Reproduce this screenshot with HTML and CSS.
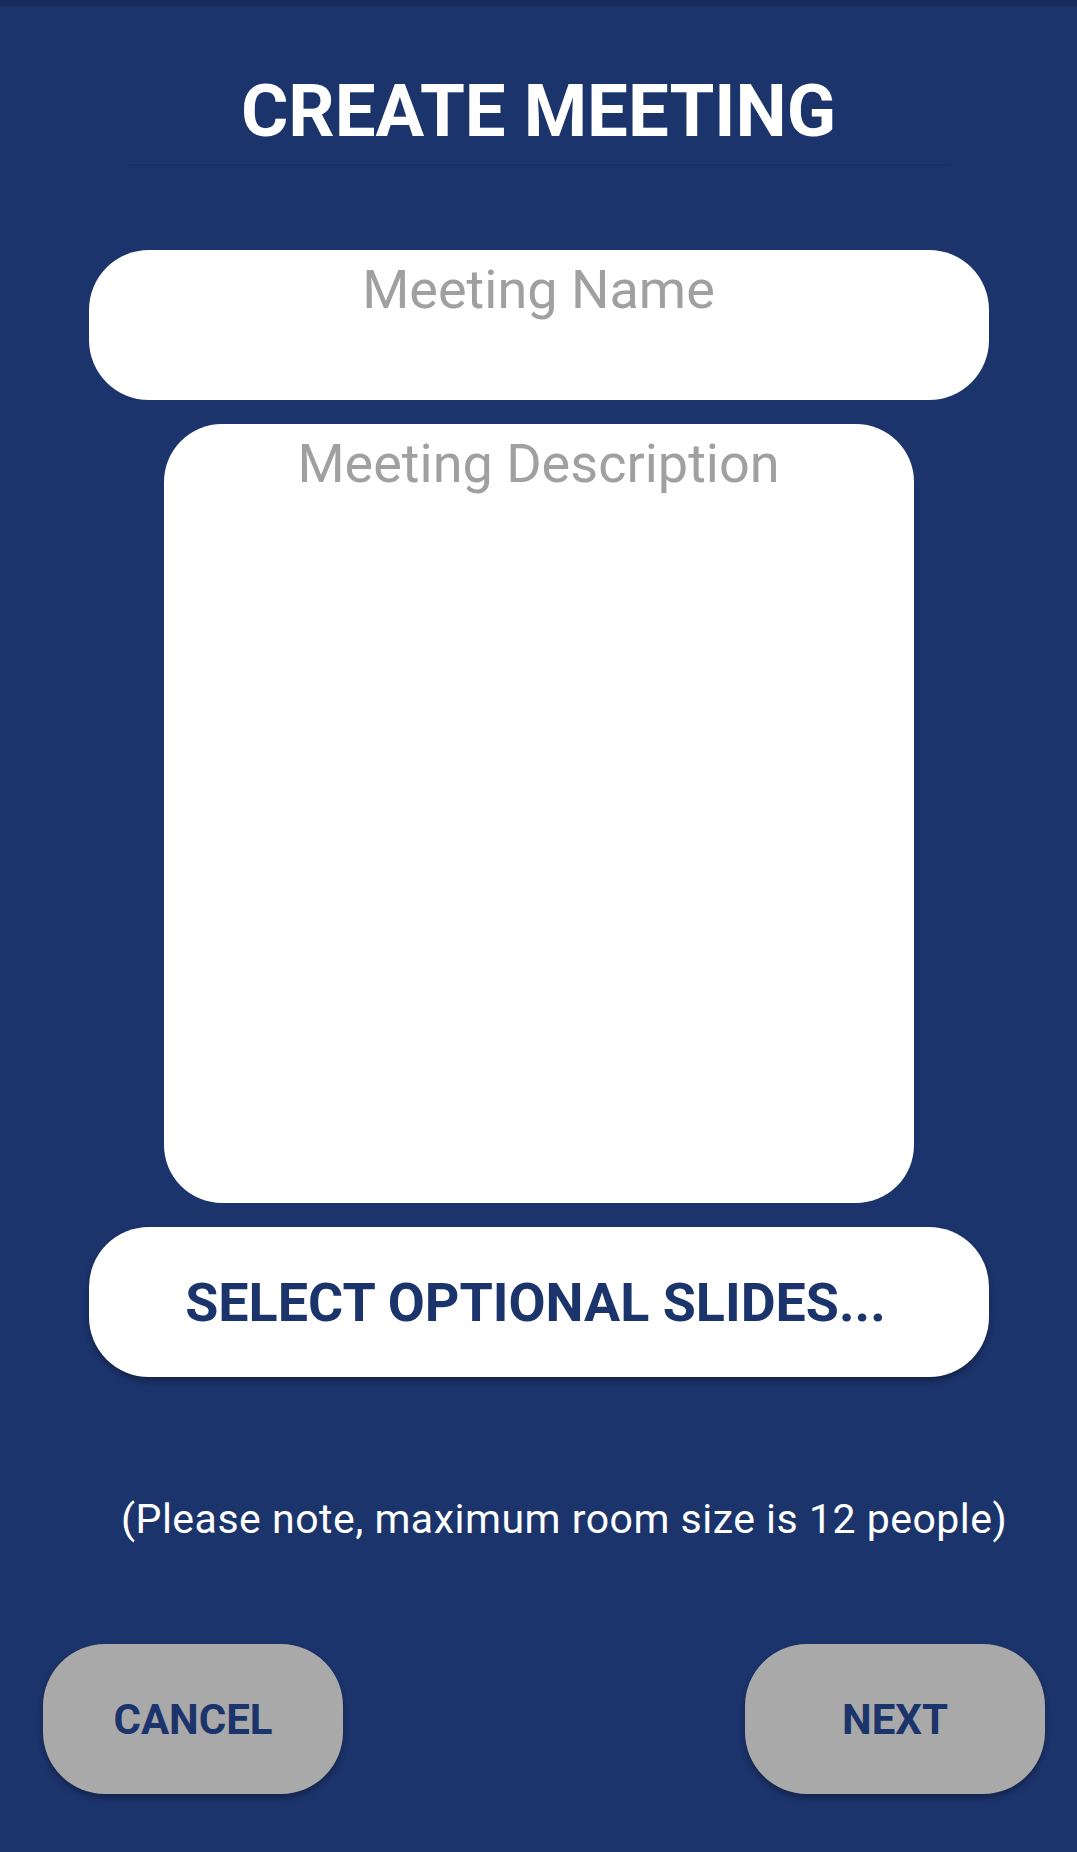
FILE: index.html
```html
<!DOCTYPE html>
<html>
<head>
<meta charset="utf-8">
<link rel="stylesheet" href="styles.css">
</head>
<body>
<div class="screen">
  <div class="status"></div>
  <h1 class="title">CREATE MEETING</h1>
  <div class="field name-field">Meeting Name</div>
  <div class="field desc-field">Meeting Description</div>
  <div class="select-btn">SELECT OPTIONAL SLIDES...</div>
  <p class="note">(Please note, maximum room size is 12 people)</p>
  <div class="actions">
    <div class="action">CANCEL</div>
    <div class="action">NEXT</div>
  </div>
</div>
</body>
</html>
```
FILE: styles.css
```css
html, body {
  margin: 0;
  padding: 0;
}
body {
  background: #1c346c;
  font-family: Roboto, "Liberation Sans", sans-serif;
}
.screen {
  width: 1077px;
  height: 1852px;
  display: flex;
  flex-direction: column;
  align-items: center;
  background: #1c346c;
}
.status {
  align-self: stretch;
  height: 6px;
  background: #1a2b5e;
}
.title {
  margin: 63px 0 0;
  padding-bottom: 9px;
  width: 824px;
  border-bottom: 2px solid rgba(0, 0, 0, 0.06);
  text-align: center;
  color: #ffffff;
  font-weight: 700;
  font-size: 72.5px;
  line-height: 86px;
}
.field {
  background: #ffffff;
  color: #a0a0a0;
  font-size: 54px;
  line-height: 66px;
  text-align: center;
  box-sizing: border-box;
  padding-top: 7px;
}
.name-field {
  margin-top: 84px;
  width: 900px;
  height: 150px;
  border-radius: 60px;
}
.desc-field {
  margin-top: 24px;
  width: 750px;
  height: 779px;
  border-radius: 58px;
}
.select-btn {
  margin-top: 24px;
  width: 900px;
  height: 150px;
  border-radius: 60px;
  background: #ffffff;
  color: #1c346c;
  font-weight: 700;
  font-size: 53.8px;
  display: flex;
  align-items: center;
  justify-content: center;
  padding-right: 6px;
  box-sizing: border-box;
  box-shadow: 0 4px 6px rgba(0, 0, 0, 0.3);
}
.note {
  margin: 119px 0 0;
  align-self: stretch;
  padding-left: 121px;
  color: #ffffff;
  font-size: 41px;
  letter-spacing: 0.5px;
  line-height: 47px;
}
.actions {
  margin-top: 101px;
  align-self: stretch;
  display: flex;
  justify-content: space-between;
  padding: 0 32px 0 43px;
}
.action {
  width: 300px;
  height: 150px;
  border-radius: 62px;
  background: #a9a9a9;
  color: #1c346c;
  font-weight: 700;
  font-size: 42px;
  display: flex;
  align-items: center;
  justify-content: center;
  box-shadow: 0 4px 6px rgba(0, 0, 0, 0.3);
}
```
